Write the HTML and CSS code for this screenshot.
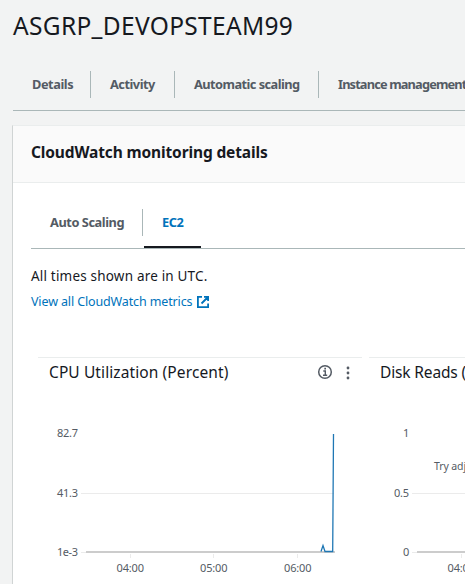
FILE: index.html
```html
<!DOCTYPE html>
<html lang="en">
<head>
<meta charset="utf-8">
<title>ASGRP_DEVOPSTEAM99</title>
<link rel="stylesheet" href="styles.css">
</head>
<body>
<h1>ASGRP_DEVOPSTEAM99</h1>
<nav class="tabs main-tabs">
  <a class="tab details">Details</a>
  <a class="tab activity">Activity</a>
  <a class="tab scaling">Automatic scaling</a>
  <a class="tab instance">Instance management</a>
</nav>
<section class="panel">
  <header><h2>CloudWatch monitoring details</h2></header>
  <div class="content">
    <nav class="tabs sub-tabs">
      <a class="tab auto">Auto Scaling</a>
      <a class="tab ec2">EC2</a>
    </nav>
    <p class="note">All times shown are in UTC.</p>
    <a class="link"><span>View all CloudWatch metrics</span>
      <svg width="14" height="14" viewBox="0 0 14 14" fill="none" stroke="#0073bb" stroke-width="1.8"><path d="M6 1.900H1.900V12.100H12.100V8.500M8 1.900H12.100V6M12 2L5.500 8.500"/></svg>
    </a>
    <div class="charts">
      <article class="chart">
        <div class="chart-head"><h3 class="cpu">CPU Utilization (Percent)</h3>
          <svg class="info" width="16" height="16" viewBox="0 0 16 16" fill="none" stroke="#545b64"><circle cx="8" cy="8" r="6.3" stroke-width="1.5"/><path d="M6.3 7H8.3V11M6 11.2H10.2" stroke-width="1.4"/><path d="M7.3 4.6H9" stroke-width="1.7"/></svg>
          <svg class="more" width="4" height="14" viewBox="0 0 4 14" fill="#545b64"><circle cx="2" cy="2" r="1.4"/><circle cx="2" cy="7" r="1.4"/><circle cx="2" cy="12" r="1.4"/></svg>
        </div>
        <svg class="plot" width="324" height="196" viewBox="38 388 324 196">
          <path class="grid" d="M81 493.5H334M81 552.5H86M130.500 554V558M213.500 554V558M297.500 554V558"/>
          <path class="axis" d="M86 552H335"/>
          <path class="line" d="M321 551.500L323 545.500L325 551.500H332.700L333.500 434"/>
          <text x="57" y="437" textLength="21">82.7</text>
          <text x="57" y="497" textLength="21">41.3</text>
          <text x="57" y="556" textLength="21">1e-3</text>
          <text x="116.500" y="572" textLength="27.500">04:00</text>
          <text x="200" y="572" textLength="27.500">05:00</text>
          <text x="284" y="572" textLength="27.500">06:00</text>
        </svg>
      </article>
      <article class="chart">
        <div class="chart-head"><h3 class="disk">Disk Reads (Bytes)</h3></div>
        <svg class="plot" width="324" height="196" viewBox="369 388 324 196">
          <path class="grid" d="M412 493.5H665M412 552.5H417M461.500 554V558"/>
          <path class="axis" d="M417 552H666"/>
          <text x="403" y="437">1</text>
          <text x="394" y="497" textLength="15">0.5</text>
          <text x="403" y="556">0</text>
          <text x="447.500" y="572" textLength="27.500">04:00</text>
          <text class="empty" x="434" y="470">Try adjusting the dashboard time range</text>
        </svg>
      </article>
    </div>
  </div>
</section>
</body>
</html>
```
FILE: styles.css
```css
* { box-sizing: border-box; }
body {
  margin: 0;
  height: 584px;
  overflow: hidden;
  background: #f2f3f3;
  color: #16191f;
  font-family: "Noto Sans", "Open Sans", sans-serif;
  white-space: nowrap;
}
h1, h2, h3, p { margin: 0; }
h1 {
  height: 58px;
  padding-left: 13px;
  font-size: 24.5px;
  font-weight: 400;
  line-height: 51px;
  letter-spacing: 0.32px;
}
.tabs { display: flex; border-bottom: 1px solid #aab7b8; }
.tab {
  flex: none;
  position: relative;
  height: 27px;
  padding-left: 19px;
  border-right: 1px solid #aab7b8;
  color: #545b64;
  font-size: 12.8px;
  font-weight: 700;
  line-height: 27px;
  letter-spacing: -0.45px;
}
.main-tabs { height: 53px; margin-left: 13px; padding-top: 13px; }
.details { width: 78px; }
.activity { width: 84px; letter-spacing: -0.5px; }
.scaling { width: 144px; letter-spacing: -0.55px; }
.instance { border-right: 0; letter-spacing: -0.85px; }
.panel {
  width: 453px;
  height: 459px;
  overflow: hidden;
  margin: 14px 0 0 12px;
  background: #fff;
  border-left: 1px solid #d0d4d4;
  border-top: 1px solid #eaeded;
}
.panel header {
  height: 57px;
  padding-left: 18px;
  background: #fafafa;
  border-bottom: 1px solid #eaeded;
}
h2 { font-size: 15.5px; line-height: 53px; letter-spacing: -0.13px; }
.content { padding-left: 18px; }
.sub-tabs { height: 66px; padding-top: 26px; }
.auto { width: 112px; }
.ec2 { border-right: 0; color: #0073bb; }
.ec2::after {
  content: "";
  position: absolute;
  left: 1px;
  top: 37px;
  width: 57px;
  height: 2px;
  background: #16191f;
}
.note { height: 26px; margin-top: 14px; font-size: 13.5px; line-height: 27px; letter-spacing: 0.19px; }
.link {
  display: flex;
  align-items: center;
  gap: 4px;
  height: 25px;
  color: #0073bb;
  font-size: 12.5px;
  letter-spacing: -0.13px;
}
.charts { display: flex; gap: 7px; margin: 43px 0 0 7px; }
.chart { flex: none; width: 324px; }
.chart-head {
  display: flex;
  align-items: center;
  height: 31px;
  padding: 0 12px 0 11px;
  border-top: 1px solid #eaeded;
}
h3 { height: 30px; font-size: 15.5px; font-weight: 400; line-height: 28px; letter-spacing: 0.1px; }
.disk { letter-spacing: -0.15px; }
.info { margin: -2px 0 0 auto; }
.more { margin: 0 0 0 13px; }
.plot { display: block; }
.plot text { fill: #545b64; font-size: 11px; }
.plot .empty { font-size: 10.5px; letter-spacing: -0.1px; }
.grid { fill: none; stroke: #ebebeb; }
.axis { stroke: #ccc; stroke-width: 2; }
.line { fill: none; stroke: #1f77b4; stroke-width: 1.3; }
```
